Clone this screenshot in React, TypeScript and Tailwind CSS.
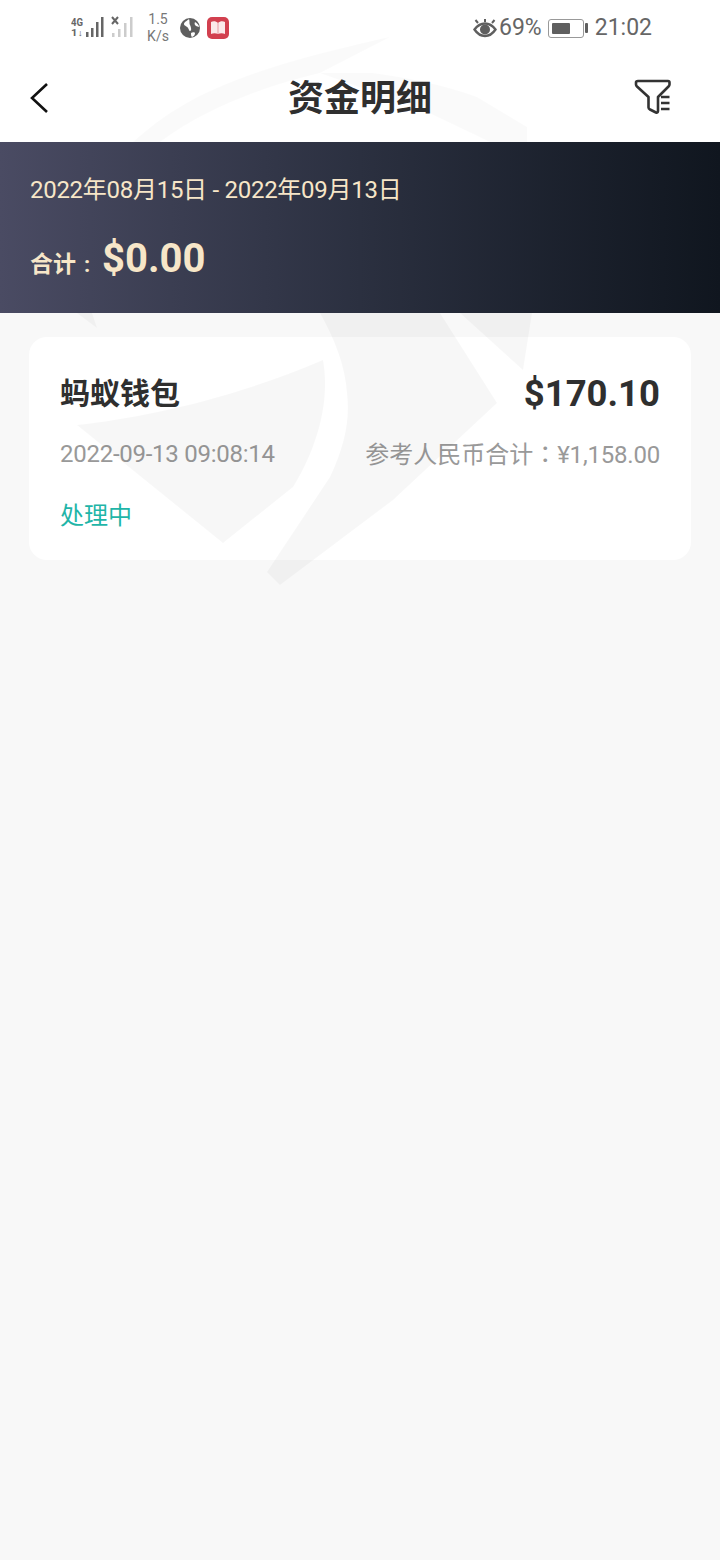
const FONT = "font-['Roboto','Noto_Sans_CJK_SC',sans-serif]";

function SignalIcon() {
  return (
    <svg width="64" height="26" viewBox="0 0 64 26" className="shrink-0">
      <text x="0" y="11" fontSize="11.5" fontWeight="700" fill="#666" textLength="12" lengthAdjust="spacingAndGlyphs" fontFamily="Roboto, sans-serif">4G</text>
      <text x="0" y="21" fontSize="9" fontWeight="700" fill="#666" textLength="12" lengthAdjust="spacingAndGlyphs" fontFamily="Roboto, sans-serif">1↓</text>
      <g fill="#666">
        <rect x="15" y="17" width="2.5" height="5" />
        <rect x="20" y="13" width="2.500" height="9" />
        <rect x="25" y="7" width="2.500" height="15" />
        <rect x="30" y="2" width="2.500" height="20" />
      </g>
      <path d="M41 2l6 7M47 2l-6 7" stroke="#666" strokeWidth="2" />
      <g fill="#ccc">
        <rect x="41" y="18" width="2.500" height="4" />
        <rect x="47" y="14" width="2.500" height="8" />
        <rect x="53" y="8" width="2.500" height="14" />
        <rect x="59" y="2" width="2.500" height="20" />
      </g>
    </svg>
  );
}

function GlobeIcon() {
  return (
    <svg width="20" height="20" viewBox="0 0 20 20">
      <circle cx="10" cy="10" r="10" fill="#5f5f5f" />
      <path d="M9 1C7 3 4 4 4 6c0 2 3 2 4 4 1 1 1 3 2 3 2 0 1-4 0-6-1-1 0-4-1-6zM15 4c-1 2 0 3 1 4l3 1c0-2-2-4-4-5zM11 15c0 2 0 3 1 4 2-1 3-2 3-4 0-1-3-1-4 0z" fill="#fff" />
    </svg>
  );
}

function BookIcon() {
  return (
    <svg width="22" height="22" viewBox="0 0 22 22">
      <rect width="22" height="22" rx="5" fill="#d2404f" />
      <path d="M4 5c2-1 5-1 7 1 2-2 5-2 7-1v12c-2-1-5-1-7 0-2-1-5-1-7 0z" fill="#fbe9ea" />
      <path d="M11 6v11" stroke="#e79aa3" strokeWidth="1" />
    </svg>
  );
}

function EyeIcon() {
  return (
    <svg width="24" height="20" viewBox="0 0 24 20" fill="none">
      <path d="M1.500 11.500c3-4 6.500-6 10.500-6s7.500 2 10.500 6c-3 4.500-6.500 6.500-10.500 6.500s-7.500-2-10.500-6.500z" stroke="#5f5f5f" strokeWidth="2.400" />
      <circle cx="12" cy="11.500" r="5" fill="#5f5f5f" />
      <path d="M5 5L2.500 2M19 5l2.500-3M12 4V1" stroke="#5f5f5f" strokeWidth="2" />
    </svg>
  );
}

function BatteryIcon() {
  return (
    <div className="flex items-center gap-[1px]">
      <div className="flex h-[19px] w-[36px] items-stretch rounded-[3px] border border-[#999] p-[3px]">
        <div className="w-[65%] rounded-[1px] bg-[#5f5f5f]" />
      </div>
      <div className="h-[10px] w-[3px] rounded-[1px] bg-[#5f5f5f]" />
    </div>
  );
}

function BackIcon() {
  return (
    <svg width="38" height="38" viewBox="0 0 38 38" fill="none">
      <path d="M27 5L12 19l15 14" stroke="#111" strokeWidth="2.600" />
    </svg>
  );
}

function FilterIcon() {
  return (
    <svg width="38" height="38" viewBox="0 0 38 38" fill="none">
      <path
        d="M4 2h30c1 0 1.500.5 1.500 1.500v2c0 1-.5 1.500-1 2L24 18v14c0 1.500-1 2-2 1.500l-6-3c-1-.5-1.500-1-1.500-2V18L3 7.500c-.5-.5-1-1-1-2v-2C2 2.500 3 2 4 2z"
        stroke="#333"
        strokeWidth="2.600"
        strokeLinejoin="round"
      />
      <path d="M27 18h8.500M27 24h8.500M27 30h8.500" stroke="#333" strokeWidth="2.600" />
    </svg>
  );
}

// big faint logo that lies over the page and the card
function Watermark() {
  return (
    <svg
      className="pointer-events-none absolute left-0 top-0 z-10"
      width="720"
      height="600"
      viewBox="0 0 720 600"
      fill="#000"
      fillOpacity="0.032"
    >
      <g fillOpacity="0.018">
        <path d="M133 142C180 100 230 72 390 37L320 73C270 85 210 105 160 142z" />
        <path d="M320 73H373C410 78 445 85 477 97L527 127V142H490L423 110z" />
      </g>
      <path d="M77 313H92L97 328z" />
      <path d="M77 425C140 418 230 400 323 360C332 410 310 460 293 487L223 543z" />
      <path d="M320 313H440L497 403L393 500L280 585L267 572L330 477C345 445 350 420 347 393C345 365 335 340 320 313z" />
      <path d="M460 313H532L523 370z" />
    </svg>
  );
}

export default function App() {
  return (
    <div className={`relative h-[1560px] w-[720px] overflow-hidden bg-[#f8f8f8] ${FONT}`}>
      <div className="bg-white">
        {/* status bar */}
        <div className="flex h-[56px] items-center justify-between pl-[71px] pr-[68px] text-[#666]">
          <div className="flex items-center">
            <SignalIcon />
            <div className="ml-[10px] flex w-[26px] flex-col items-center text-[14px] leading-[17px] text-[#777]">
              <span>1.5</span>
              <span>K/s</span>
            </div>
            <div className="ml-[9px] flex items-center gap-[7px]">
              <GlobeIcon />
              <BookIcon />
            </div>
          </div>
          <div className="flex items-center text-[23px]">
            <EyeIcon />
            <span className="ml-[2px]">69%</span>
            <div className="ml-[6px]">
              <BatteryIcon />
            </div>
            <span className="ml-[7px]">21:02</span>
          </div>
        </div>
        {/* nav bar */}
        <div className="grid h-[86px] grid-cols-[1fr_auto_1fr] items-center">
          <div className="pb-[2px] pl-[20px]">
            <BackIcon />
          </div>
          <h1 className="text-[36px] font-bold leading-none text-[#2f2f2f]">资金明细</h1>
          <div className="flex justify-end pb-[2px] pr-[48px]">
            <FilterIcon />
          </div>
        </div>
      </div>

      <Watermark />

      {/* summary banner */}
      <div className="relative z-20 flex h-[171px] flex-col bg-gradient-to-r from-[#4a4b63] via-[#2b3040] to-[#10161f] px-[30px] pt-[33px] text-[#f7e6c8]">
        <div className="text-[24px] leading-[30px] tracking-[-0.28px]">2022年08月15日 - 2022年09月13日</div>
        <div className="mt-[29px] flex items-baseline">
          <span className="text-[23px] font-bold">合计</span>
          <span className="ml-[8px] w-[18px] text-[22px] font-bold">:</span>
          <span className="text-[40px] font-bold leading-[50px]">$0.00</span>
        </div>
      </div>

      {/* record card */}
      <div className="mx-[29px] mt-[24px] h-[223px] rounded-[18px] bg-white px-[31px] pt-[35px]">
        <div className="flex items-center justify-between">
          <span className="text-[30px] font-bold leading-[44px] text-[#2f2f2f]">蚂蚁钱包</span>
          <span className="text-[36.500px] font-bold leading-[44px] text-[#2f2f2f]">$170.10</span>
        </div>
        <div className="mt-[21px] flex items-center justify-between text-[24px] leading-[32px] text-[#999]">
          <span className="tracking-[-0.26px]">2022-09-13 09:08:14</span>
          <span>
            参考人民币合计<span className="font-['Noto_Sans_CJK_TC',sans-serif]">：</span>
            <span className="tracking-[-0.2px]">¥1,158.00</span>
          </span>
        </div>
        <div className="mt-[29px] text-[24px] leading-[32px] text-[#1fb5a8]">处理中</div>
      </div>
    </div>
  );
}
